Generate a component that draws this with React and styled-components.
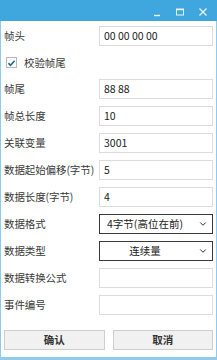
import React from "react";
import styled, { createGlobalStyle } from "styled-components";
import { ChevronDown } from "lucide-react";

const GlobalStyle = createGlobalStyle`
  html, body {
    margin: 0;
    padding: 0;
    background: #ffffff;
  }
  * {
    box-sizing: border-box;
  }
`;

const fields = [
  { label: "帧尾", value: "88 88" },
  { label: "帧总长度", value: "10" },
  { label: "关联变量", value: "3001" },
  { label: "数据起始偏移(字节)", value: "5" },
  { label: "数据长度(字节)", value: "4" },
  { label: "数据格式", value: "4字节(高位在前)", select: true },
  { label: "数据类型", value: "连续量", select: true },
  { label: "数据转换公式", value: "" },
  { label: "事件编号", value: "" },
];

const App = () => {
  return (
    <>
      <GlobalStyle />
      <Window>
        <TitleBar>
          <TitleIcon>
            <svg width="10" height="10" viewBox="0 0 10 10">
              <path d="M2 8.5h6" stroke="#e8f5fc" strokeWidth="1.4" />
            </svg>
          </TitleIcon>
          <TitleIcon>
            <svg width="10" height="10" viewBox="0 0 10 10">
              <rect x="1.5" y="2" width="7" height="6" fill="none" stroke="#e8f5fc" strokeWidth="1" />
              <path d="M1.5 2.6h7" stroke="#e8f5fc" strokeWidth="1.2" />
            </svg>
          </TitleIcon>
          <TitleIcon>
            <svg width="10" height="10" viewBox="0 0 10 10">
              <path d="M1.5 1.5l7 7M8.5 1.5l-7 7" stroke="#e8f5fc" strokeWidth="1.3" />
            </svg>
          </TitleIcon>
        </TitleBar>
        <Body>
          <Row>
            <Label>帧头</Label>
            <Field>00 00 00 00</Field>
          </Row>
          <CheckRow>
            <CheckBox>
              <svg width="10" height="10" viewBox="0 0 10 10">
                <path d="M1.6 5.2l2.3 2.3 4.6-5" fill="none" stroke="#1d6a96" strokeWidth="1.8" />
              </svg>
            </CheckBox>
            <Label>校验帧尾</Label>
          </CheckRow>
          {fields.map((f) => (
            <Row key={f.label}>
              <Label>{f.label}</Label>
              {f.select ? (
                <Select>
                  <span>{f.value}</span>
                  <Chevron>
                    <ChevronDown size={10} strokeWidth={2.4} color="#333" />
                  </Chevron>
                </Select>
              ) : (
                <Field>{f.value}</Field>
              )}
            </Row>
          ))}
          <Buttons>
            <Button>确认</Button>
            <Button>取消</Button>
          </Buttons>
        </Body>
      </Window>
    </>
  );
};

export default App;

const Window = styled.div`
  width: 217px;
  height: 360px;
  display: flex;
  flex-direction: column;
  background: #ffffff;
  border: 1px solid #8fcbea;
  border-top: none;
  border-bottom-width: 3px;
  font-family: "Noto Sans CJK SC", "Noto Sans", sans-serif;
  font-size: 10.5px;
  color: #222;
`;

const TitleBar = styled.div`
  height: 21px;
  margin: 0 -1px;
  background: #3fa7dd;
  display: flex;
  align-items: center;
  justify-content: flex-end;
  gap: 13px;
  padding: 2px 9px 0 0;
`;

const TitleIcon = styled.div`
  width: 10px;
  height: 10px;
  display: flex;
`;

const Body = styled.div`
  flex: 1;
  display: flex;
  flex-direction: column;
  gap: 7px;
  padding: 5px 3px 7px 3px;
`;

const Row = styled.div`
  display: grid;
  grid-template-columns: 95px 1fr;
  align-items: center;
  height: 20px;
`;

const Label = styled.div`
  white-space: nowrap;
  line-height: 20px;
  color: #3a3a3a;
  letter-spacing: -0.1px;
`;

const Field = styled.div`
  height: 20px;
  border: 1px solid #dcdcdc;
  background: #fff;
  padding: 0 4px;
  line-height: 18px;
  color: #222;
`;

const Select = styled.div`
  height: 20px;
  border: 1px solid #3a3a3a;
  background: #fff;
  display: flex;
  align-items: center;
  line-height: 18px;

  span {
    flex: 1;
    text-align: center;
    padding-right: 4px;
  }
`;

const Chevron = styled.div`
  width: 18px;
  display: flex;
  align-items: center;
  justify-content: center;
`;

const CheckRow = styled.div`
  display: flex;
  align-items: center;
  gap: 7px;
  height: 19px;
  padding-left: 2px;
`;

const CheckBox = styled.div`
  width: 11px;
  height: 11px;
  border: 1px solid #b8b8b8;
  display: flex;
  align-items: center;
  justify-content: center;
  background: #fff;
`;

const Buttons = styled.div`
  margin-top: auto;
  display: grid;
  grid-template-columns: 1fr 1fr;
  gap: 8px;
`;

const Button = styled.div`
  height: 20px;
  border: 1px solid #cfcfcf;
  background: #f1f1f1;
  text-align: center;
  line-height: 18px;
  font-weight: 700;
  color: #333;
`;
